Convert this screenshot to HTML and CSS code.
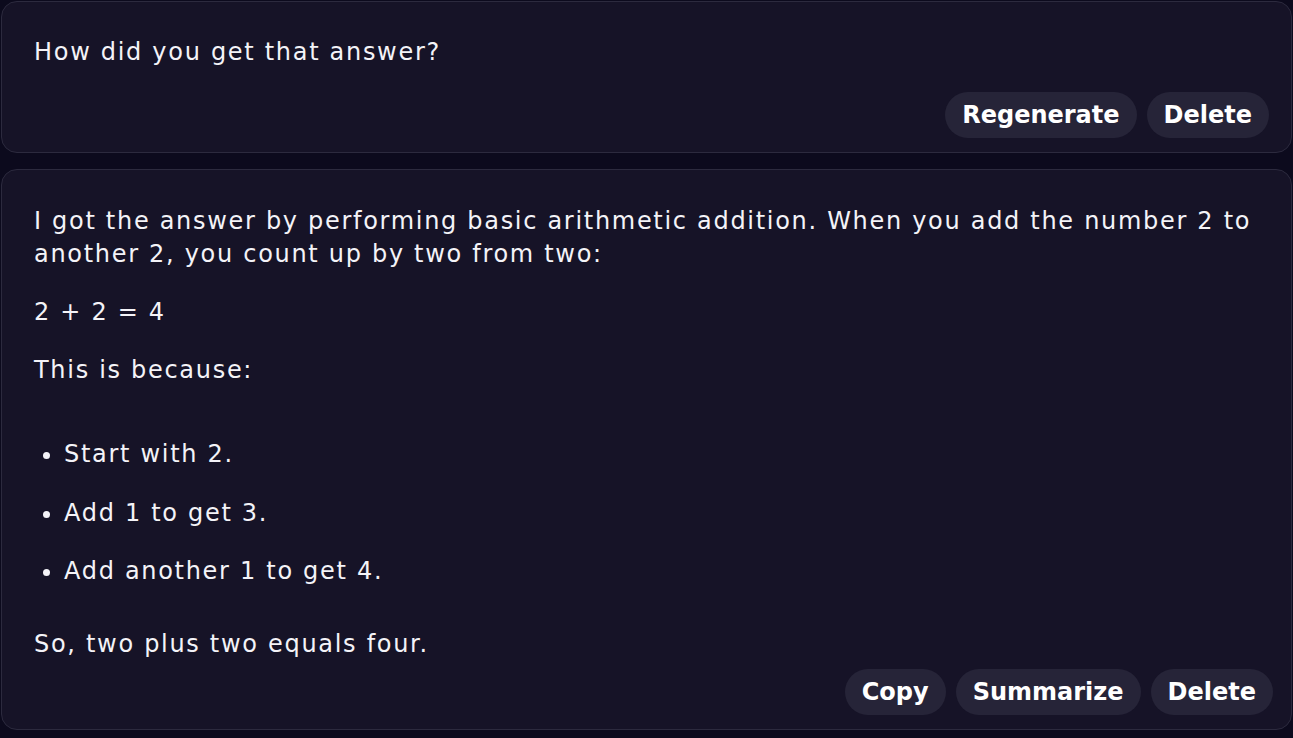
FILE: index.html
```html
<!DOCTYPE html>
<html lang="en">
<head>
    <meta charset="UTF-8">
    <meta name="viewport" content="width=device-width, initial-scale=1.0">
    <title>Chat</title>
    <link rel="stylesheet" href="styles.css">
</head>
<body>
    <div class="message user">
        <p>How did you get that answer?</p>
        <div class="actions">
            <button>Regenerate</button>
            <button>Delete</button>
        </div>
    </div>

    <div class="message bot">
        <p>I got the answer by performing basic arithmetic addition. When you add the number 2 to another 2, you count up by two from two:</p>
        <p>2 + 2 = 4</p>
        <p>This is because:</p>
        <ul>
            <li>Start with 2.</li>
            <li>Add 1 to get 3.</li>
            <li>Add another 1 to get 4.</li>
        </ul>
        <p class="last">So, two plus two equals four.</p>
        <div class="actions">
            <button>Copy</button>
            <button>Summarize</button>
            <button>Delete</button>
        </div>
    </div>
</body>
</html>
```

FILE: styles.css
```css
body {
    font-family: "DejaVu Sans", Verdana, sans-serif;
    background-color: #0c0a1d;
    color: #f4f3f8;
    margin: 0;
    padding: 1px;
}

.message {
    background: #161327;
    border: 1px solid #2c2a3e;
    border-radius: 16px;
    padding: 34px 22px 14px 32px;
    margin-bottom: 16px;
    font-size: 24px;
    line-height: 33px;
    letter-spacing: 1.7px;
}

.message p {
    margin: 0 0 25px 0;
}

.user p {
    margin-bottom: 23px;
}

.bot {
    padding-top: 35px;
    padding-right: 18px;
}

.bot ul {
    margin: 0 0 40px 0;
    padding: 26px 0 0 30px;
}

.bot li {
    margin-bottom: 25.5px;
}

.bot p.last {
    margin-bottom: 8px;
}

.actions {
    display: flex;
    justify-content: flex-end;
    gap: 10px;
    letter-spacing: normal;
}

button {
    font-family: "DejaVu Sans", Verdana, sans-serif;
    font-size: 24px;
    font-weight: bold;
    color: #ffffff;
    background-color: #262438;
    border: none;
    border-radius: 23px;
    height: 46px;
    padding: 0 17px;
    cursor: pointer;
}
```
